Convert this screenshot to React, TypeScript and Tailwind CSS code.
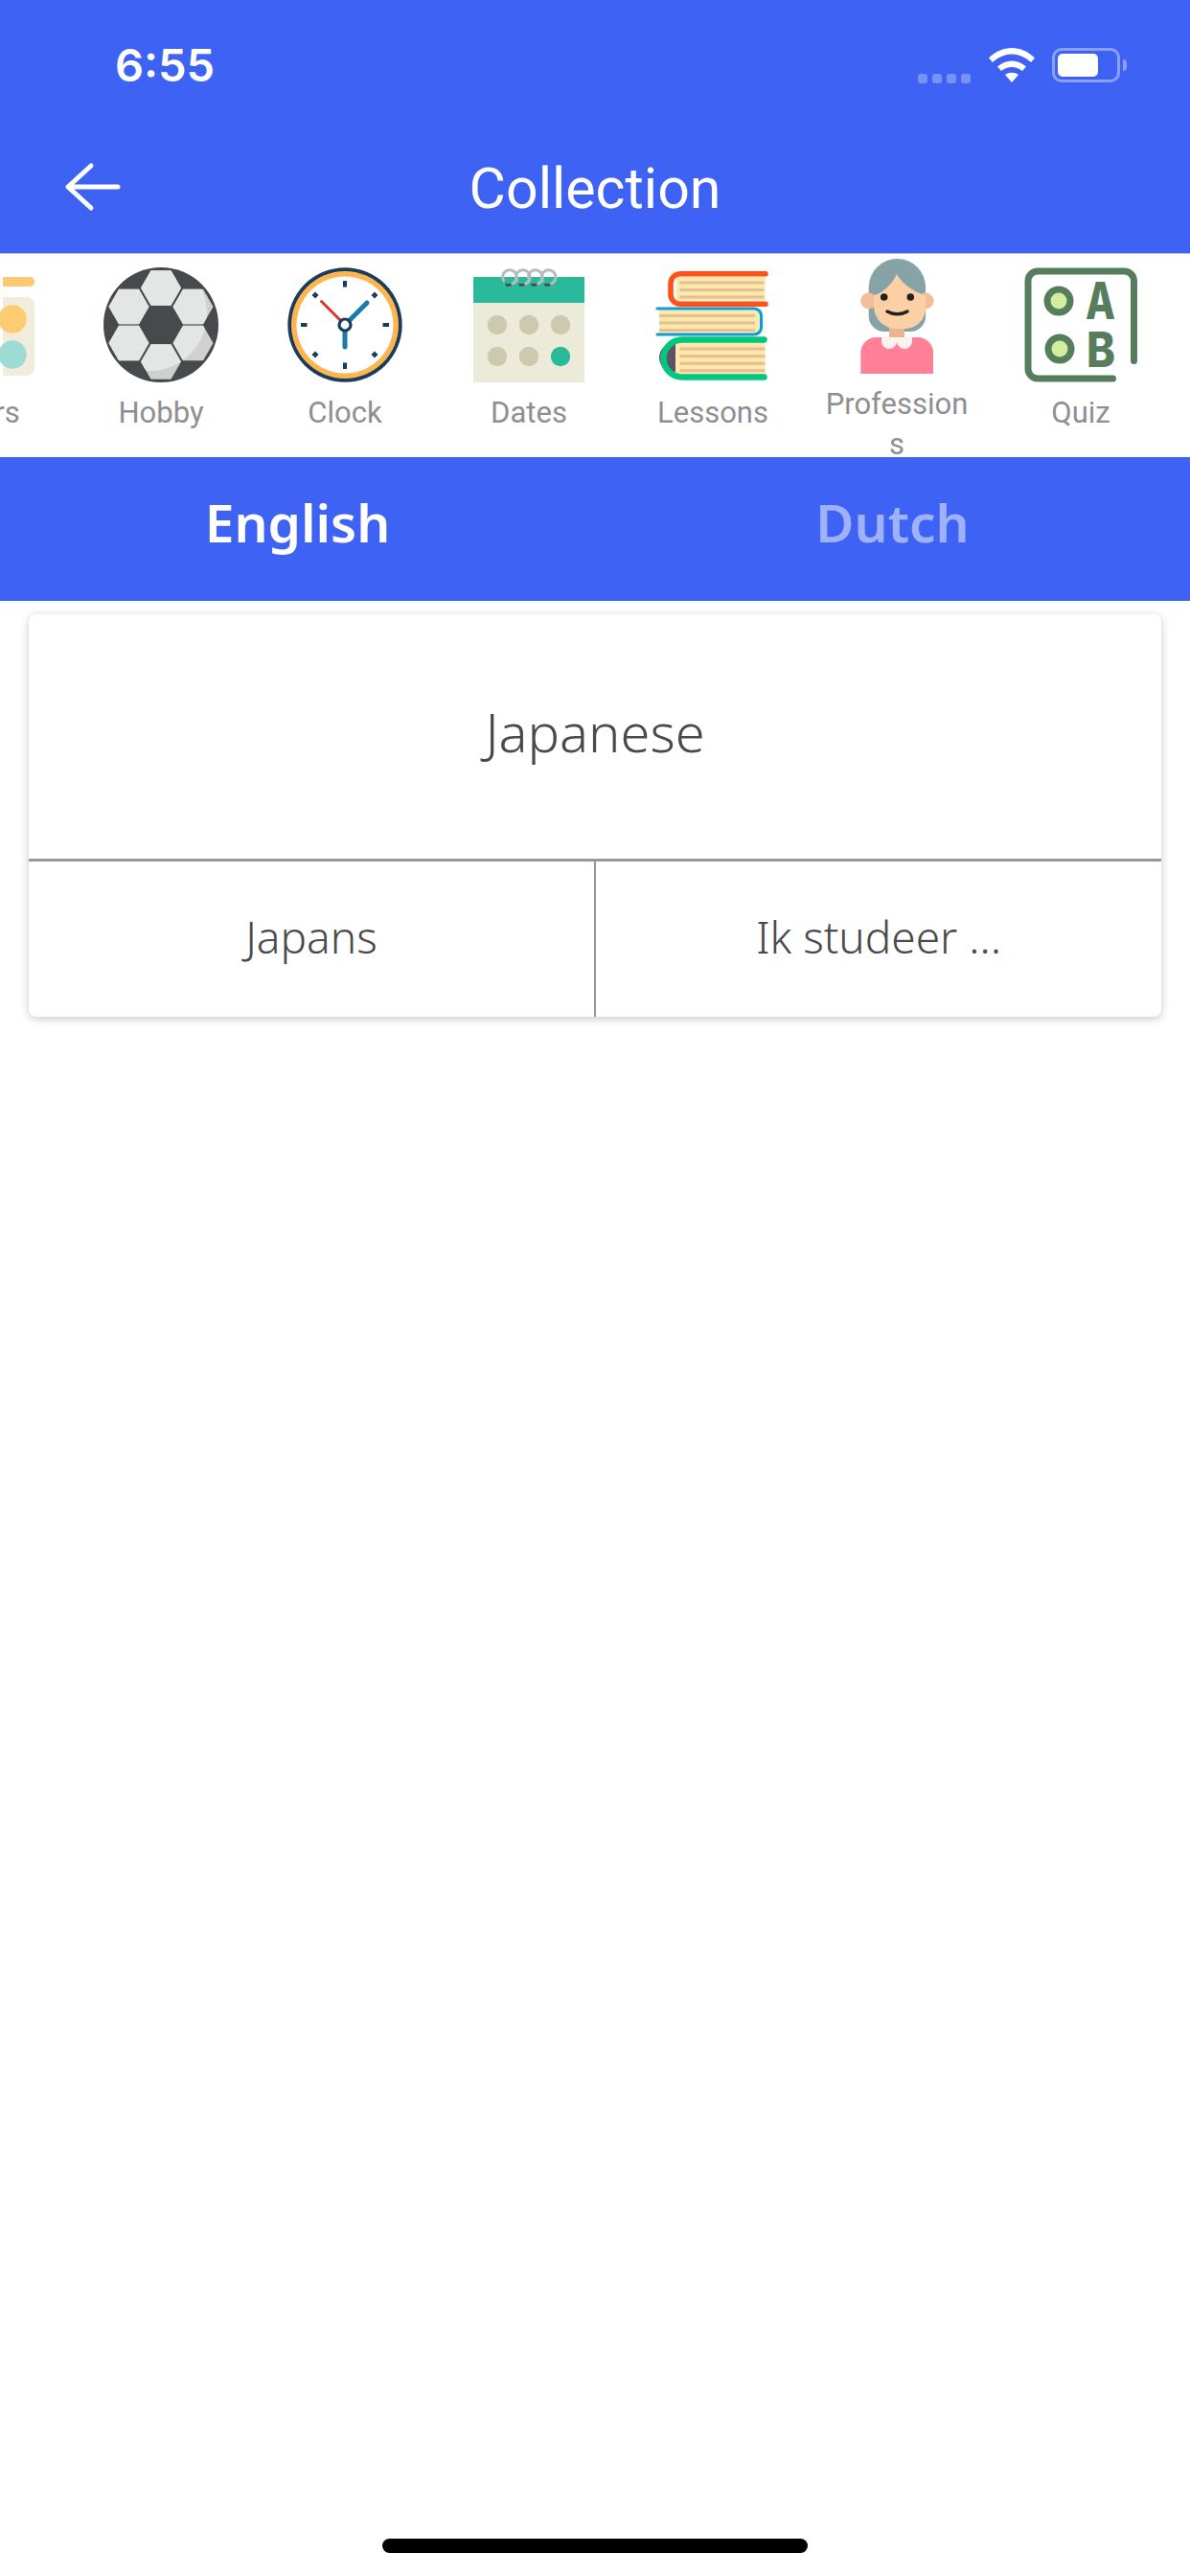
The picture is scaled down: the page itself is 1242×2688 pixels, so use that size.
import React from 'react';

const hex = (cx: number, cy: number, r: number) =>
  [0, 60, 120, 180, 240, 300]
    .map((a) => {
      const t = (a * Math.PI) / 180;
      return `${cx + r * Math.cos(t)},${cy + r * Math.sin(t)}`;
    })
    .join(' ');

const BALL_HEXES: [number, number][] = [
  [60, 21.5],
  [26.5, 41],
  [93.5, 41],
  [26.5, 79],
  [93.5, 79],
  [60, 98.5],
];

const ColorsIcon = () => (
  <svg viewBox="0 0 120 120" className="w-[120px] h-[120px] shrink-0">
    <path d="M87 10h28a5 5 0 0 1 0 10H87z" fill="#fdc970" />
    <path d="M87 31h25a8 8 0 0 1 8 8v66a8 8 0 0 1-8 8H87z" fill="#f1ecdc" />
    <circle cx="97" cy="54" r="14.7" fill="#fdcb72" />
    <circle cx="97" cy="91" r="14.7" fill="#9cdcd4" />
  </svg>
);

const BallIcon = () => (
  <svg viewBox="0 0 120 120" className="w-[120px] h-[120px] shrink-0">
    <defs>
      <clipPath id="ball">
        <circle cx="60" cy="60" r="60" />
      </clipPath>
      <clipPath id="ballLight">
        <circle cx="48" cy="48" r="60" />
      </clipPath>
    </defs>
    <circle cx="60" cy="60" r="60" fill="#474a4c" />
    <g clipPath="url(#ball)">
      {BALL_HEXES.map(([x, y]) => (
        <polygon key={`${x}-${y}`} points={hex(x, y, 21)} fill="#cfd0cf" />
      ))}
    </g>
    <g clipPath="url(#ballLight)">
      {BALL_HEXES.map(([x, y]) => (
        <polygon key={`${x}-${y}`} points={hex(x, y, 21)} fill="#e4e6e5" />
      ))}
    </g>
  </svg>
);

const ClockIcon = () => (
  <svg viewBox="0 0 120 120" className="w-[120px] h-[120px] shrink-0">
    <circle cx="60" cy="60" r="59.7" fill="#1a3b5c" />
    <circle cx="60" cy="60" r="56" fill="#fdb64f" />
    <circle cx="60" cy="60" r="50.5" fill="#fff" />
    <g fill="#1a3b5c">
      <rect x="58" y="14" width="4" height="6.5" />
      <rect x="58" y="99.5" width="4" height="6.5" />
      <rect x="14" y="58" width="6.5" height="4" />
      <rect x="99.5" y="58" width="6.5" height="4" />
      <rect x="26.5" y="26.5" width="5" height="5" transform="rotate(45 29 29)" />
      <rect x="88.5" y="26.5" width="5" height="5" transform="rotate(45 91 29)" />
      <rect x="26.5" y="88.5" width="5" height="5" transform="rotate(45 29 91)" />
      <rect x="88.5" y="88.5" width="5" height="5" transform="rotate(45 91 91)" />
    </g>
    <path d="M35.5 35.5 60 60" stroke="#d0392b" strokeWidth="3" strokeLinecap="round" />
    <path d="M83 37 60 60v23" stroke="#1a7bab" strokeWidth="5" strokeLinecap="round" strokeLinejoin="round" fill="none" />
    <circle cx="60" cy="60" r="6" fill="#fff" stroke="#1a3b5c" strokeWidth="3.2" />
  </svg>
);

const CalendarIcon = () => (
  <svg viewBox="0 0 120 120" className="w-[120px] h-[120px] shrink-0">
    <rect x="2" y="37" width="116" height="83" fill="#ecead9" />
    <rect x="2" y="10" width="116" height="27" fill="#2ab99a" />
    {[27, 60, 93].map((x) => (
      <React.Fragment key={x}>
        <circle cx={x} cy="60" r="10.2" fill="#cec8ae" />
        <circle cx={x} cy="93" r="10.2" fill={x === 93 ? '#2ab99a' : '#cec8ae'} />
      </React.Fragment>
    ))}
    {[39.7, 53.5, 66.5, 80.3].map((x) => (
      <g key={x} fill="none" strokeLinecap="round">
        <path d={`M${x + 3} 17a6 6 0 0 1-6 1`} stroke="#474a4c" strokeWidth="2.6" />
        <path d={`M${x - 6} 14a7.4 7.4 0 1 1 9 3`} stroke="#b4bcc0" strokeWidth="3" />
      </g>
    ))}
  </svg>
);

const BooksIcon = () => (
  <svg viewBox="0 0 120 120" className="w-[120px] h-[120px] shrink-0">
    <rect x="22" y="10" width="92.5" height="24.5" fill="#fde9a9" />
    <g stroke="#e6bd94" strokeWidth="3">
      <path d="M25.5 16h88M25.5 23.5h88M25.5 31h88" />
    </g>
    <path d="M115 6.7H26a10 10 0 0 0-10 10v11.6a10 10 0 0 0 10 10h89" fill="none" stroke="#ff5119" strokeWidth="5.6" strokeLinecap="round" />
    <rect x="4" y="44.5" width="104" height="24" fill="#fde9a9" />
    <g stroke="#e6bd94" strokeWidth="3">
      <path d="M4 50.5h100M4 58h100M4 65.5h100" />
    </g>
    <path d="M2 43h101a7.5 7.5 0 0 1 7.5 7.5v12a7.5 7.5 0 0 1-7.5 7.5H2" fill="none" stroke="#0e9dd0" strokeWidth="3.2" strokeLinecap="round" />
    <rect x="21" y="78" width="93.5" height="33" fill="#fde9a9" />
    <path d="M21 79h-2a14 14 0 0 0 0 30h2z" fill="#5d5267" />
    <g stroke="#e6bd94" strokeWidth="3">
      <path d="M25.5 85h89M25.5 92.7h89M25.5 100.3h89M25.5 107.7h89" />
    </g>
    <path d="M113.5 75.5H28a19.5 19.5 0 0 0 0 39h85.5" fill="none" stroke="#04c67f" strokeWidth="6.5" strokeLinecap="round" />
  </svg>
);

const PersonIcon = () => (
  <svg viewBox="0 0 120 120" className="w-[120px] h-[120px] shrink-0">
    <path d="M30.7 30a29.7 30 0 0 1 59.4 0v30a16 16 0 0 1-16 16H46.700a16 16 0 0 1-16-16z" fill="#86a3a8" />
    <circle cx="30.7" cy="44" r="8.5" fill="#f5be9b" />
    <circle cx="90" cy="44" r="8.5" fill="#f5be9b" />
    <rect x="52" y="68" width="16" height="16" fill="#e8b592" />
    <path d="M36 38C46 36 55 26 60 16c5 10 20 20 30 22v13c0 12-9 22-22 22h-8c-14 0-24-11-24-24z" fill="#fdcfa4" />
    <path d="M22.3 120V98a16 16 0 0 1 16-16h43.7a16 16 0 0 1 16 16v22z" fill="#ff8097" />
    <path d="M44 82h32v3a7.5 7.5 0 0 1-16 2 7.5 7.5 0 0 1-16-2z" fill="#fdf3ed" />
    <circle cx="46.7" cy="40" r="3.8" fill="#222" />
    <circle cx="74.3" cy="40" r="3.8" fill="#222" />
    <path d="M50 55c6 3.500 15 3.500 21 0" fill="none" stroke="#222" strokeWidth="3.500" strokeLinecap="round" />
  </svg>
);

const QuizIcon = () => (
  <svg viewBox="0 0 120 120" className="w-[120px] h-[120px] shrink-0">
    <path d="M115.500 97.500V14a10 10 0 0 0-10-10H15A10 10 0 0 0 5 14v92a10 10 0 0 0 10 10h78.500" fill="none" stroke="#567e5c" strokeWidth="7" strokeLinecap="round" />
    <circle cx="37" cy="35" r="12" fill="#d0ee9c" stroke="#567e5c" strokeWidth="7" />
    <circle cx="38" cy="85" r="12" fill="#d0ee9c" stroke="#567e5c" strokeWidth="7" />
    <text x="65" y="54" textLength="31" lengthAdjust="spacingAndGlyphs" fontSize="53" fontWeight="800" fill="#567e5c" style={{ fontFamily: 'Inter, sans-serif' }}>A</text>
    <text x="66" y="104" textLength="30" lengthAdjust="spacingAndGlyphs" fontSize="51" fontWeight="800" fill="#567e5c" style={{ fontFamily: 'Inter, sans-serif' }}>B</text>
  </svg>
);

const items = [
  { label: 'Colors', icon: <ColorsIcon /> },
  { label: 'Hobby', icon: <BallIcon /> },
  { label: 'Clock', icon: <ClockIcon /> },
  { label: 'Dates', icon: <CalendarIcon /> },
  { label: 'Lessons', icon: <BooksIcon /> },
  { label: 'Professions', icon: <PersonIcon /> },
  { label: 'Quiz', icon: <QuizIcon /> },
];

const StatusBar = () => (
  <div className="h-[136px] flex items-center justify-between pl-[120px] pr-[73px]">
    <span className="text-[47px] font-semibold text-white font-['Inter',sans-serif]">6:55</span>
    <div className="flex items-center">
      <div className="flex gap-[5px] mt-[28px] mr-[19px]">
        <span className="w-[10px] h-[10px] rounded-[3px] bg-white/30" />
        <span className="w-[10px] h-[10px] rounded-[3px] bg-white/30" />
        <span className="w-[10px] h-[10px] rounded-[3px] bg-white/30" />
        <span className="w-[10px] h-[10px] rounded-[3px] bg-white/30" />
      </div>
      <svg viewBox="0 0 48 36" className="w-[48px] h-[36px] mr-[18px]" fill="#fff">
        <path d="M0 10.500C14-3.500 34-3.500 48 10.500l-4 4.500C31 3.500 17 3.500 4 15z" />
        <path d="M9 19.500c9-8 21-8 30 0l-4 4.500c-7-5.500-15-5.500-22 0z" />
        <path d="M17 28c4.500-3 9.500-3 14 0l-7 8z" />
      </svg>
      <div className="relative w-[71px] h-[36px] rounded-[10px] border-[3px] border-white/40 p-[3px]">
        <div className="w-[42px] h-full rounded-[5px] bg-white" />
        <div className="absolute left-[71px] top-[9px] w-[4px] h-[12px] rounded-r-full bg-white/40" />
      </div>
    </div>
  </div>
);

export default function App() {
  return (
    <div className="w-[1242px] h-[2688px] bg-white flex flex-col overflow-hidden font-['Noto_Sans',sans-serif]">
      <div className="bg-[#3e62f3] h-[265px] border-b border-[#b9bdc9]">
        <StatusBar />
        <div className="relative h-[128px] flex items-center justify-center pb-[6px]">
          <svg viewBox="0 0 60 52" className="absolute left-[66px] top-[33px] w-[60px] h-[52px]" fill="none" stroke="#fff" strokeWidth="5" strokeLinecap="round" strokeLinejoin="round">
            <path d="M57 26H5M29 4 5 26l24 22" />
          </svg>
          <span className="text-[59px] text-white font-['Roboto',sans-serif]">Collection</span>
        </div>
      </div>

      <div className="h-[212px] shrink-0 flex overflow-hidden ml-[-120px]">
        {items.map((item) => (
          <div
            key={item.label}
            className={`w-[192px] shrink-0 flex flex-col items-center ${item.label === 'Professions' ? 'pt-[5px]' : 'pt-[14px]'}`}
          >
            {item.icon}
            <span className={`text-[31px] leading-[42px] text-center text-[#8e8e93] font-['Roboto',sans-serif] ${item.label === 'Professions' ? 'mt-[11px]' : 'mt-[11px]'}`}>
              {item.label === 'Professions' ? (
                <>
                  Profession
                  <br />s
                </>
              ) : (
                item.label
              )}
            </span>
          </div>
        ))}
      </div>

      <div className="h-[150px] shrink-0 bg-[#3e62f3] flex items-center pb-[14px] text-[55px] font-semibold">
        <div className="w-[621px] text-center text-white">English</div>
        <div className="w-[621px] text-center text-white/50">Dutch</div>
      </div>

      <div className="mt-[14px] mx-[30px] bg-white rounded-[8px] shadow-[0_2px_10px_rgba(0,0,0,0.22)] overflow-hidden font-light text-[#4a4a4a]">
        <div className="h-[258px] flex items-center justify-center pb-[12px] text-[56px] border-b-[3px] border-[#979797]">Japanese</div>
        <div className="h-[162px] flex text-[46px]">
          <div className="flex-1 flex items-center justify-center pb-[6px]">Japans</div>
          <div className="flex-1 flex items-center justify-center pb-[6px] border-l-2 border-[#979797]">Ik studeer ...</div>
        </div>
      </div>

      <div className="mt-auto mb-[24px] mx-auto w-[444px] h-[15px] rounded-full bg-black" />
    </div>
  );
}
